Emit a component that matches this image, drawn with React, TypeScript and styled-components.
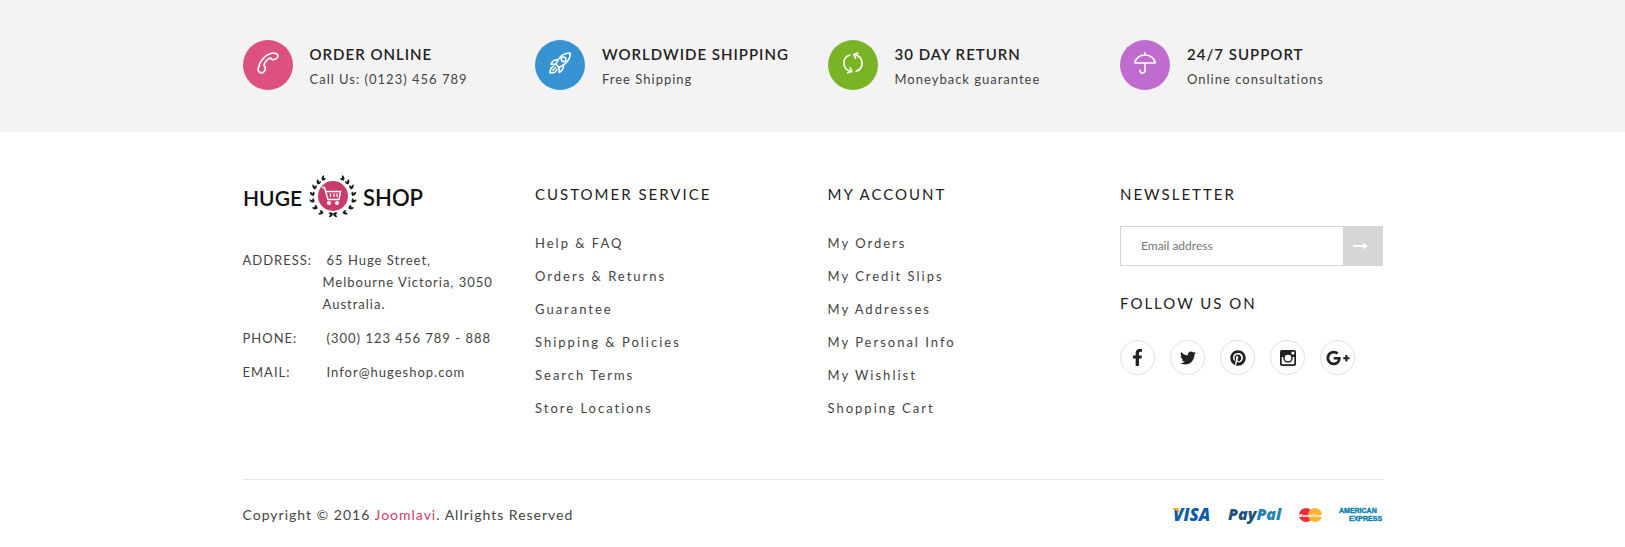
import React from "react";
import styled, { createGlobalStyle } from "styled-components";
import { FaFacebookF, FaTwitter, FaPinterest, FaGooglePlusG } from "react-icons/fa";

const GlobalStyle = createGlobalStyle`
  *, *::before, *::after { box-sizing: border-box; }
  body {
    margin: 0;
    background: #fff;
    color: #444;
    font-family: Lato, "Open Sans", sans-serif;
    font-size: 14px;
    line-height: 22px;
  }
  h2, h3, p, ul, dl, dd { margin: 0; padding: 0; }
  ul { list-style: none; }
`;

const Container = styled.div`
  max-width: 1170px;
  margin: 0 auto;
  padding: 0 15px;
`;

const Columns = styled.div`
  display: grid;
  grid-template-columns: repeat(4, minmax(0, 1fr));
  column-gap: 30px;
`;

const FeatureBar = styled.section`
  background: #f3f3f3;
  padding: 40px 0;
`;

const Feature = styled.div`
  display: flex;
  gap: 17px;
  white-space: nowrap;
`;

const FeatureIcon = styled.span<{ $color: string }>`
  flex: none;
  display: flex;
  justify-content: center;
  width: 50px;
  height: 50px;
  padding-top: 12px;
  border-radius: 50%;
  background: ${(p) => p.$color};

  svg {
    width: 22px;
    height: 22px;
    fill: none;
    stroke: #fff;
    stroke-width: 1.6;
    stroke-linecap: round;
    stroke-linejoin: round;
  }
`;

const FeatureText = styled.div`
  padding-top: 2px;
`;

const FeatureTitle = styled.h3`
  color: #222;
  font-size: 15px;
  font-weight: 600;
  line-height: 24px;
  letter-spacing: 1px;
`;

const FeatureNote = styled.p`
  font-size: 13px;
  line-height: 26px;
  letter-spacing: 1px;
`;

const FooterMain = styled.footer`
  padding-top: 43px;
`;

const LogoLink = styled.a`
  display: block;
  width: 182px;
  height: 44px;
  margin-bottom: 30px;

  svg {
    display: block;
  }
`;

const Contact = styled.dl`
  display: grid;
  row-gap: 12px;
  font-size: 13px;
  letter-spacing: 1px;
`;

const ContactRow = styled.div`
  display: flex;
  white-space: nowrap;

  dt {
    flex: none;
    width: 80px;
  }
  dd {
    text-indent: 4px;
  }
`;

const Heading = styled.h2`
  color: #222;
  font-size: 15px;
  font-weight: 400;
  line-height: 22px;
  letter-spacing: 2px;
  text-transform: uppercase;
`;

const LinkColumn = styled.nav`
  padding-top: 8px;

  ul {
    margin-top: 22px;
  }
`;

const FooterLink = styled.a`
  display: block;
  color: #444;
  font-size: 13px;
  line-height: 33px;
  letter-spacing: 2px;
  text-decoration: none;
`;

const NewsletterColumn = styled.div`
  padding-top: 8px;
`;

const NewsletterForm = styled.form`
  display: flex;
  height: 40px;
  margin: 21px 0 26px;
`;

const EmailInput = styled.input`
  flex: 1;
  min-width: 0;
  padding: 0 20px;
  border: 1px solid #d5d5d5;
  border-right: 0;
  border-radius: 0;
  background: #fff;
  color: #444;
  font: inherit;
  font-size: 12px;
  outline: none;

  &::placeholder {
    color: #757575;
    opacity: 1;
  }
`;

const SubmitButton = styled.button`
  display: flex;
  align-items: center;
  justify-content: center;
  width: 40px;
  padding: 0 4px 0 0;
  border: 0;
  background: #d6d6d6;
  cursor: pointer;
`;

const SocialList = styled.ul`
  display: flex;
  gap: 15px;
  margin-top: 26px;
`;

const SocialLink = styled.a`
  display: flex;
  align-items: center;
  justify-content: center;
  width: 35px;
  height: 35px;
  border: 1px solid #e1e1e1;
  border-radius: 50%;
  color: #222;
`;

const BottomBar = styled.div`
  display: flex;
  justify-content: space-between;
  align-items: center;
  margin-top: 54px;
  padding: 20px 0 17px;
  border-top: 1px solid #e5e5e5;
`;

const Copyright = styled.p`
  font-size: 14px;
  letter-spacing: 1px;

  a {
    color: #cf3d6c;
    text-decoration: none;
  }
`;

const PaymentLogos = styled.div`
  display: flex;
  align-items: center;

  svg {
    display: block;
  }
`;

const PhoneIcon = () => (
  <svg viewBox="0 0 22 22" aria-hidden="true">
    <path d="M1 17C2 15 1.800 12.800 3.600 10C6.300 5.500 10.300 2.500 14.500 1.300C17.500 .400 20.900 1.900 20.900 3.900C20.900 6.200 17.300 8.200 15 7.500C13.900 7.100 14.200 6 13.200 5.900C10.500 7 7.800 10 6.900 13.200C7 14.300 8.200 14.300 8.400 15.700C8.600 17.900 6.900 20.500 5.200 20.900C3.300 21.300 .700 19.200 1 17Z" />
  </svg>
);

const RocketIcon = () => (
  <svg viewBox="0 0 22 22" aria-hidden="true">
    <path d="M21.200 1C16 .800 12 3.200 9 7.800L6.800 12.200L10 15.400L14.500 13C19 10 21.400 6.500 21.200 1Z" />
    <circle cx="14.600" cy="7.300" r="2.300" />
    <path d="M9 7.800C5.500 7.400 3.200 9.200 2 12.200L6.800 12.200M14.500 13C14.600 16.500 13 19 10.200 20.500L10 15.400" />
    <path d="M4.800 14.200C2 14.500 1.200 17.500 1 21C4.500 20.900 7.500 20 7.900 17.300M6.300 15.700L3.800 18.200" />
  </svg>
);

const RefreshIcon = () => (
  <svg viewBox="0 0 22 22" aria-hidden="true">
    <path d="M7.800 3C3.500 4.500 1.500 8 2 12C2.400 15.400 4.700 18.200 8 19.200M14.200 19.300C18.300 17.800 20.600 14.200 20 10C19.500 6.600 17.200 4 13.800 2.700" />
    <path d="M5.800 20.700L9.800 19.600L8.200 15.800M15.900 1L11.800 2.400L13.600 6.200" />
  </svg>
);

const UmbrellaIcon = () => (
  <svg viewBox="0 0 22 22" aria-hidden="true">
    <path d="M11 3V.800M.900 11C1.200 6.500 5.500 3 11 3S20.800 6.500 21.100 11ZM11 11V18.500C11 22 5.900 22 5.900 18.200" />
  </svg>
);

const ArrowIcon = () => (
  <svg width="15" height="8" viewBox="0 0 15 8" fill="#fff" aria-hidden="true">
    <path d="M0 3H10V.8L15 4L10 7.200V5H0Z" />
  </svg>
);

const InstagramIcon = () => (
  <svg width="16" height="16" viewBox="0 0 16 16" fill="currentColor" aria-hidden="true">
    <path
      fillRule="evenodd"
      d="M1.800 0H14.200Q16 0 16 1.800V14.200Q16 16 14.200 16H1.800Q0 16 0 14.200V1.800Q0 0 1.800 0ZM11.500 1.700V4.400H14.300V1.700ZM1.700 7V14.300H14.300V7H12.700A4.800 4.800 0 1 1 3.300 7ZM8 4.700A3.300 3.300 0 1 0 8 11.300A3.300 3.300 0 0 0 8 4.700Z"
    />
  </svg>
);

const leaves = [
  { x: 10, y: -18, angle: 30 },
  { x: 15, y: -14, angle: 50 },
  { x: 19, y: -9, angle: 70 },
  { x: 21, y: -2, angle: 90 },
  { x: 21, y: 5, angle: 110 },
  { x: 18, y: 12, angle: 130 },
  { x: 12, y: 17, angle: 155 },
  { x: 2, y: 19, angle: 180 },
];

const LaurelSide = () => (
  <g fill="#1b1b1b">
    {leaves.map((leaf) => (
      <path
        key={leaf.angle}
        transform={`translate(${leaf.x} ${leaf.y}) rotate(${leaf.angle})`}
        d="M2 1.600Q-1.600 1.200-2.200-2.200Q1.600-2.200 2 1.600ZM2 1.600Q-.800 3.700-2.400 1.700Q-.800-.400 2 1.600Z"
      />
    ))}
  </g>
);

const Logo = () => (
  <svg width="182" height="44" viewBox="0 0 182 44" role="img" aria-label="Huge Shop">
    <g fill="#111" fontFamily="Lato, sans-serif" fontSize="22" fontWeight="600">
      <text x="0" y="31" fontSize="21">HUGE</text>
      <text x="120" y="31">SHOP</text>
    </g>
    <g transform="translate(90 21)">
      <circle r="15" fill="#c93b68" />
      <LaurelSide />
      <g transform="scale(-1 1)">
        <LaurelSide />
      </g>
      <path d="M-11-8.500H-8.500L-5 3.500H6L7.500-4.500H-6.500" fill="none" stroke="#fff" strokeWidth="1.500" />
      <path d="M-2.500-2.500V1M1-2.500V1M4-2.500V1" stroke="#fff" strokeWidth="1.300" />
      <circle cx="-4" cy="7" r="2" fill="#fff" />
      <circle cx="4" cy="7" r="2" fill="#fff" />
    </g>
  </svg>
);

const PaymentMarks = () => (
  <svg
    width="212"
    height="30"
    viewBox="0 -6 212 30"
    role="img"
    aria-label="Visa, PayPal, MasterCard, American Express"
    fontFamily="'Open Sans', sans-serif"
    fontWeight="800"
    fontStyle="italic"
  >
    <text x="2" y="15" fill="#0f5da8" fontSize="17">VISA</text>
    <path d="M0 2H6Q7.500 2 8 4L9 8Q6 4 0 2Z" fill="#f5a72a" />
    <text x="57" y="14" fontSize="16">
      <tspan fill="#1f5479">Pay</tspan>
      <tspan fill="#2284b4">Pal</tspan>
    </text>
    <circle cx="135" cy="9" r="7" fill="#ec2c3d" />
    <circle cx="144" cy="9" r="7" fill="#fcb52f" />
    <text x="128" y="11" fill="#fff" fontSize="4">MasterCard</text>
    <g
      fill="#0a80ad"
      stroke="#0a80ad"
      strokeWidth=".4"
      fontFamily="'Liberation Sans', sans-serif"
      fontSize="7"
      fontWeight="700"
      fontStyle="normal"
    >
      <text x="168" y="7">AMERICAN</text>
      <text x="178" y="15">EXPRESS</text>
    </g>
  </svg>
);

const features = [
  { title: "ORDER ONLINE", note: "Call Us: (0123) 456 789", color: "#dc5180", Icon: PhoneIcon },
  { title: "WORLDWIDE SHIPPING", note: "Free Shipping", color: "#3792d1", Icon: RocketIcon },
  { title: "30 DAY RETURN", note: "Moneyback guarantee", color: "#79b427", Icon: RefreshIcon },
  { title: "24/7 SUPPORT", note: "Online consultations", color: "#c06bd0", Icon: UmbrellaIcon },
];

const linkGroups = [
  {
    title: "Customer Service",
    links: ["Help & FAQ", "Orders & Returns", "Guarantee", "Shipping & Policies", "Search Terms", "Store Locations"],
  },
  {
    title: "My Account",
    links: ["My Orders", "My Credit Slips", "My Addresses", "My Personal Info", "My Wishlist", "Shopping Cart"],
  },
];

const socials = [
  { name: "Facebook", icon: <FaFacebookF size={17} /> },
  { name: "Twitter", icon: <FaTwitter size={16} /> },
  { name: "Pinterest", icon: <FaPinterest size={16} /> },
  { name: "Instagram", icon: <InstagramIcon /> },
  { name: "Google Plus", icon: <FaGooglePlusG size={24} /> },
];

export default function App() {
  return (
    <>
      <GlobalStyle />
      <FeatureBar>
        <Container>
          <Columns>
            {features.map(({ title, note, color, Icon }) => (
              <Feature key={title}>
                <FeatureIcon $color={color}>
                  <Icon />
                </FeatureIcon>
                <FeatureText>
                  <FeatureTitle>{title}</FeatureTitle>
                  <FeatureNote>{note}</FeatureNote>
                </FeatureText>
              </Feature>
            ))}
          </Columns>
        </Container>
      </FeatureBar>
      <FooterMain>
        <Container>
          <Columns>
            <div>
              <LogoLink href="#home">
                <Logo />
              </LogoLink>
              <Contact>
                <ContactRow>
                  <dt>ADDRESS:</dt>
                  <dd>
                    65 Huge Street,
                    <br />
                    Melbourne Victoria, 3050
                    <br />
                    Australia.
                  </dd>
                </ContactRow>
                <ContactRow>
                  <dt>PHONE:</dt>
                  <dd>(300) 123 456 789 - 888</dd>
                </ContactRow>
                <ContactRow>
                  <dt>EMAIL:</dt>
                  <dd>Infor@hugeshop.com</dd>
                </ContactRow>
              </Contact>
            </div>
            {linkGroups.map((group) => (
              <LinkColumn key={group.title} aria-label={group.title}>
                <Heading>{group.title}</Heading>
                <ul>
                  {group.links.map((link) => (
                    <li key={link}>
                      <FooterLink href="#link">{link}</FooterLink>
                    </li>
                  ))}
                </ul>
              </LinkColumn>
            ))}
            <NewsletterColumn>
              <Heading>Newsletter</Heading>
              <NewsletterForm onSubmit={(e) => e.preventDefault()}>
                <EmailInput type="email" placeholder="Email address" aria-label="Email address" />
                <SubmitButton type="submit" aria-label="Subscribe">
                  <ArrowIcon />
                </SubmitButton>
              </NewsletterForm>
              <Heading>Follow us on</Heading>
              <SocialList>
                {socials.map(({ name, icon }) => (
                  <li key={name}>
                    <SocialLink href="#social" aria-label={name}>
                      {icon}
                    </SocialLink>
                  </li>
                ))}
              </SocialList>
            </NewsletterColumn>
          </Columns>
          <BottomBar>
            <Copyright>
              Copyright © 2016 <a href="#joomlavi">Joomlavi</a>. Allrights Reserved
            </Copyright>
            <PaymentLogos>
              <PaymentMarks />
            </PaymentLogos>
          </BottomBar>
        </Container>
      </FooterMain>
    </>
  );
}
